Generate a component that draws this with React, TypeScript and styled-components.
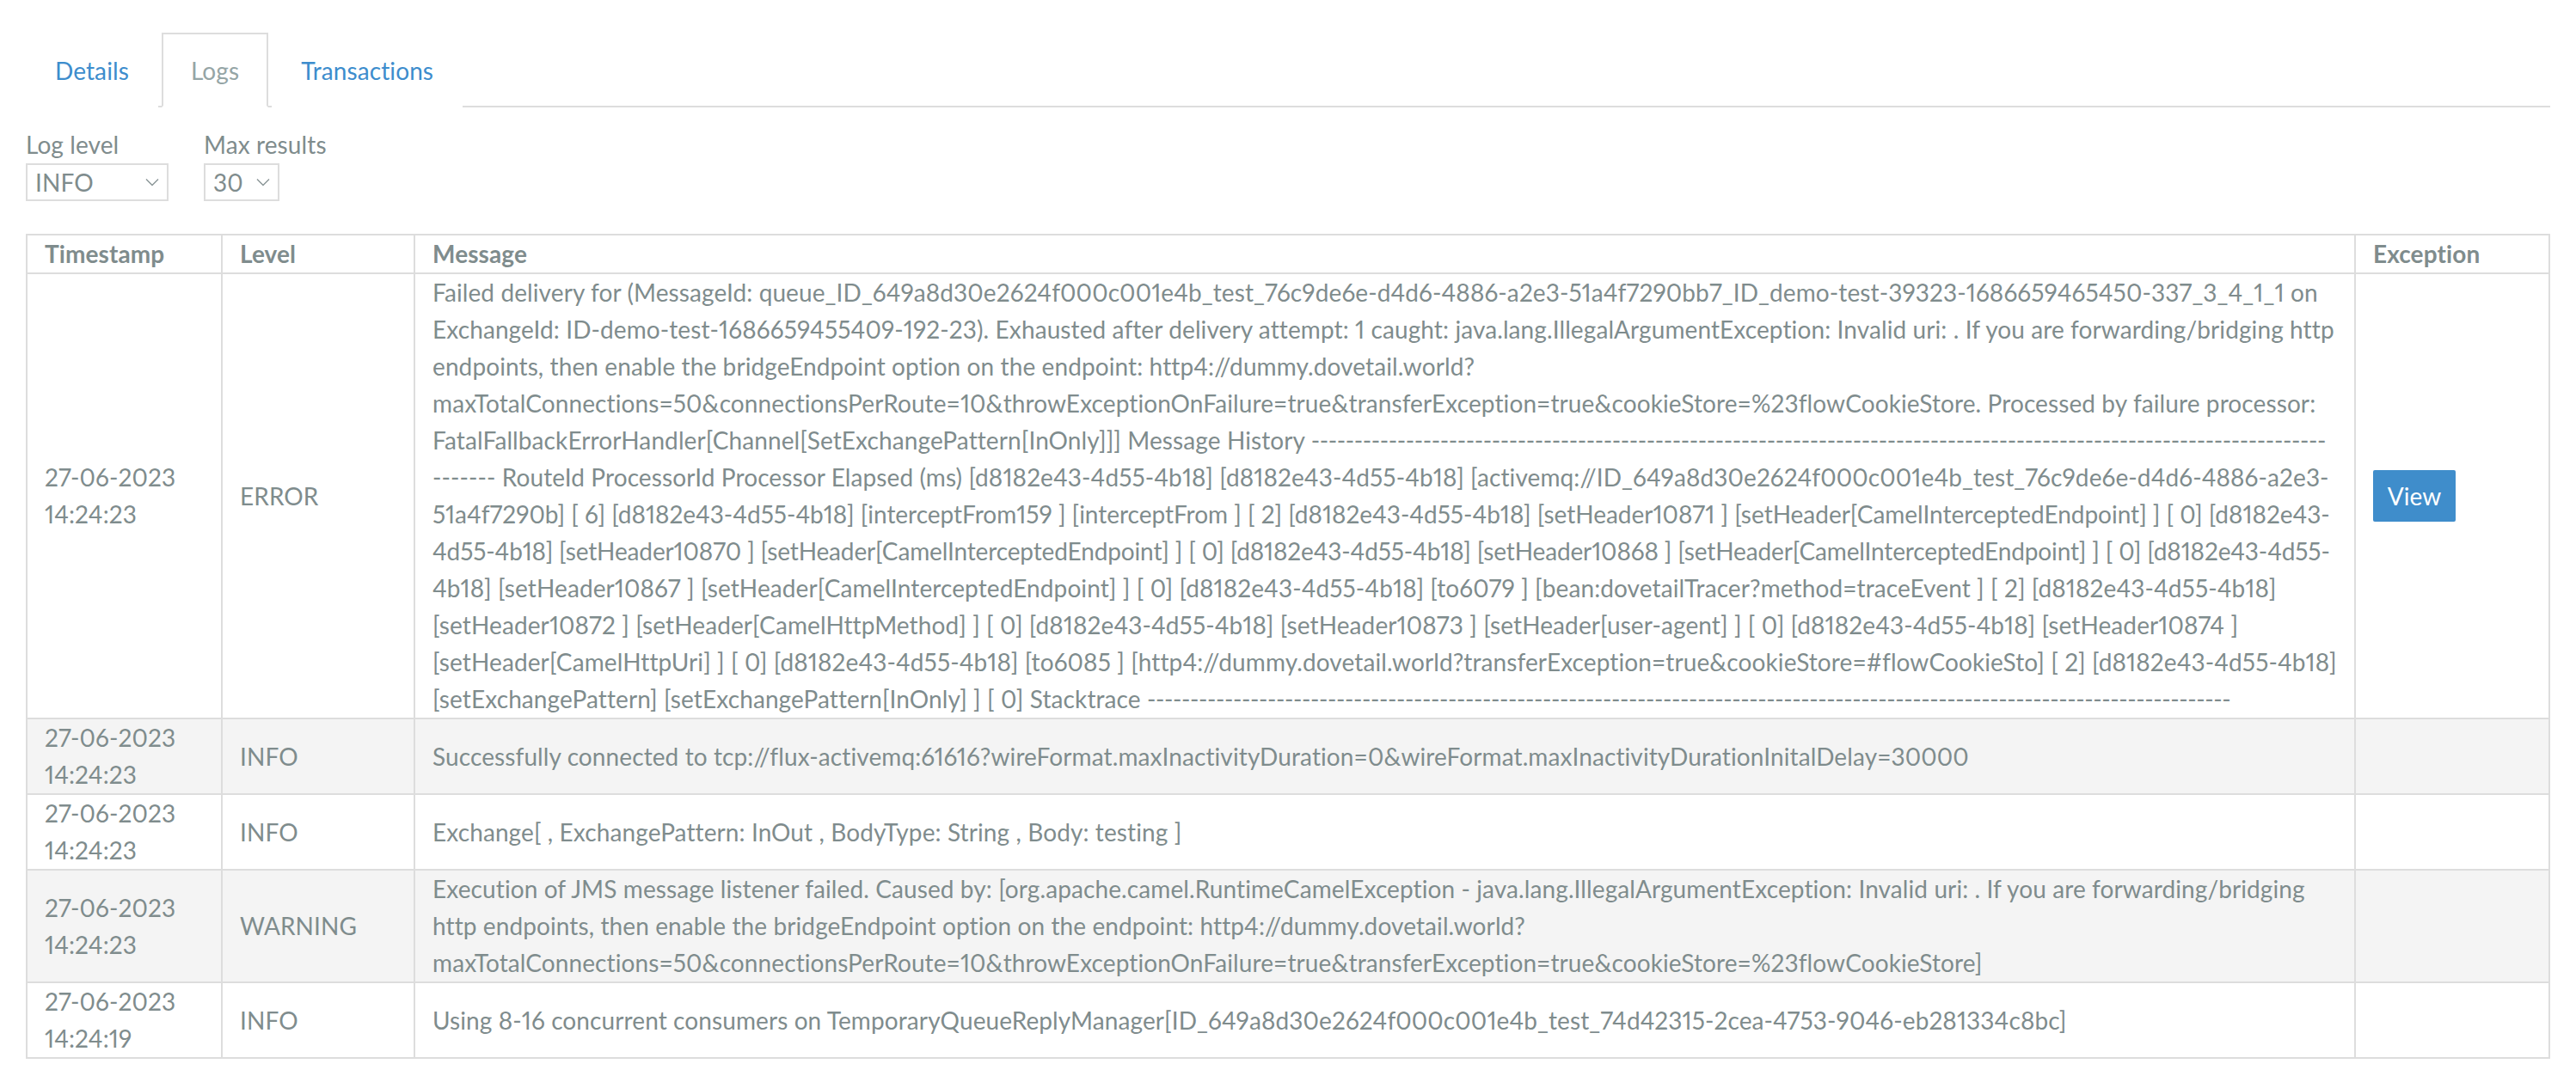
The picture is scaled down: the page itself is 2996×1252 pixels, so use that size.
import React, { useLayoutEffect, useRef, useState } from "react";
import styled, { createGlobalStyle } from "styled-components";

const GlobalStyle = createGlobalStyle`
  html, body {
    margin: 0;
    padding: 0;
    background: #ffffff;
  }
  body {
    font-family: "Lato", "Open Sans", sans-serif;
    font-size: 28px;
    letter-spacing: 0.1px;
    font-variant-numeric: proportional-nums;
    color: #7f8c8d;
  }
`;

type MsgLine = string | { text: string; dashes: number };

type LogRow = {
  date: string;
  time: string;
  level: string;
  lines: MsgLine[];
  exception?: boolean;
};

const rows: LogRow[] = [
  {
    date: "27-06-2023",
    time: "14:24:23",
    level: "ERROR",
    exception: true,
    lines: [
      "Failed delivery for (MessageId: queue_ID_649a8d30e2624f000c001e4b_test_76c9de6e-d4d6-4886-a2e3-51a4f7290bb7_ID_demo-test-39323-1686659465450-337_3_4_1_1 on",
      "ExchangeId: ID-demo-test-1686659455409-192-23). Exhausted after delivery attempt: 1 caught: java.lang.IllegalArgumentException: Invalid uri: . If you are forwarding/bridging http",
      "endpoints, then enable the bridgeEndpoint option on the endpoint: http4://dummy.dovetail.world?",
      "maxTotalConnections=50&connectionsPerRoute=10&throwExceptionOnFailure=true&transferException=true&cookieStore=%23flowCookieStore. Processed by failure processor:",
      { text: "FatalFallbackErrorHandler[Channel[SetExchangePattern[InOnly]]] Message History ", dashes: 118 },
      "------- RouteId ProcessorId Processor Elapsed (ms) [d8182e43-4d55-4b18] [d8182e43-4d55-4b18] [activemq://ID_649a8d30e2624f000c001e4b_test_76c9de6e-d4d6-4886-a2e3-",
      "51a4f7290b] [ 6] [d8182e43-4d55-4b18] [interceptFrom159 ] [interceptFrom ] [ 2] [d8182e43-4d55-4b18] [setHeader10871 ] [setHeader[CamelInterceptedEndpoint] ] [ 0] [d8182e43-",
      "4d55-4b18] [setHeader10870 ] [setHeader[CamelInterceptedEndpoint] ] [ 0] [d8182e43-4d55-4b18] [setHeader10868 ] [setHeader[CamelInterceptedEndpoint] ] [ 0] [d8182e43-4d55-",
      "4b18] [setHeader10867 ] [setHeader[CamelInterceptedEndpoint] ] [ 0] [d8182e43-4d55-4b18] [to6079 ] [bean:dovetailTracer?method=traceEvent ] [ 2] [d8182e43-4d55-4b18]",
      "[setHeader10872 ] [setHeader[CamelHttpMethod] ] [ 0] [d8182e43-4d55-4b18] [setHeader10873 ] [setHeader[user-agent] ] [ 0] [d8182e43-4d55-4b18] [setHeader10874 ]",
      "[setHeader[CamelHttpUri] ] [ 0] [d8182e43-4d55-4b18] [to6085 ] [http4://dummy.dovetail.world?transferException=true&cookieStore=#flowCookieSto] [ 2] [d8182e43-4d55-4b18]",
      { text: "[setExchangePattern] [setExchangePattern[InOnly] ] [ 0] Stacktrace ", dashes: 126 },
    ],
  },
  {
    date: "27-06-2023",
    time: "14:24:23",
    level: "INFO",
    lines: [
      "Successfully connected to tcp://flux-activemq:61616?wireFormat.maxInactivityDuration=0&wireFormat.maxInactivityDurationInitalDelay=30000",
    ],
  },
  {
    date: "27-06-2023",
    time: "14:24:23",
    level: "INFO",
    lines: ["Exchange[ , ExchangePattern: InOut , BodyType: String , Body: testing ]"],
  },
  {
    date: "27-06-2023",
    time: "14:24:23",
    level: "WARNING",
    lines: [
      "Execution of JMS message listener failed. Caused by: [org.apache.camel.RuntimeCamelException - java.lang.IllegalArgumentException: Invalid uri: . If you are forwarding/bridging",
      "http endpoints, then enable the bridgeEndpoint option on the endpoint: http4://dummy.dovetail.world?",
      "maxTotalConnections=50&connectionsPerRoute=10&throwExceptionOnFailure=true&transferException=true&cookieStore=%23flowCookieStore]",
    ],
  },
  {
    date: "27-06-2023",
    time: "14:24:19",
    level: "INFO",
    lines: [
      "Using 8-16 concurrent consumers on TemporaryQueueReplyManager[ID_649a8d30e2624f000c001e4b_test_74d42315-2cea-4753-9046-eb281334c8bc]",
    ],
  },
];

const BASE_SPACING = 0.1;

// keeps a log line on one row: squeezes the letter spacing when it would overflow
const MessageLine = ({ line }: { line: MsgLine }) => {
  const ref = useRef<HTMLDivElement>(null);
  const [spacing, setSpacing] = useState<number | null>(null);
  const text = typeof line === "string" ? line : line.text;

  useLayoutEffect(() => {
    const el = ref.current;
    if (!el) return;
    const over = el.scrollWidth - el.clientWidth;
    if (over > 0) setSpacing(BASE_SPACING - over / text.length - 0.05);
  }, [text]);

  return (
    <Line
      ref={ref}
      style={spacing !== null ? { letterSpacing: `${spacing}px` } : undefined}
    >
      {text}
      {typeof line !== "string" && <Dashes>{"-".repeat(line.dashes)}</Dashes>}
    </Line>
  );
};

const Chevron = () => (
  <svg width="16" height="10" viewBox="0 0 16 10" fill="none">
    <path d="M1 1.5 L8 8.5 L15 1.5" stroke="#8a9697" strokeWidth="1.4" />
  </svg>
);

const App = () => {
  return (
    <Page>
      <GlobalStyle />
      <Tabs>
        <Tab>Details</Tab>
        <Tab $active>Logs</Tab>
        <Tab>Transactions</Tab>
      </Tabs>

      <Filters>
        <Field>
          <Label>Log level</Label>
          <Select $width={166}>
            <span>INFO</span>
            <Chevron />
          </Select>
        </Field>
        <Field>
          <Label>Max results</Label>
          <Select $width={88}>
            <span>30</span>
            <Chevron />
          </Select>
        </Field>
      </Filters>

      <Table>
        <colgroup>
          <col style={{ width: 227 }} />
          <col style={{ width: 224 }} />
          <col />
          <col style={{ width: 226 }} />
        </colgroup>
        <thead>
          <tr>
            <Th>Timestamp</Th>
            <Th>Level</Th>
            <Th>Message</Th>
            <Th>Exception</Th>
          </tr>
        </thead>
        <tbody>
          {rows.map((row, i) => (
            <Tr key={i} $striped={i % 2 === 1}>
              <Td>
                {row.date}
                <br />
                {row.time}
              </Td>
              <Td>{row.level}</Td>
              <MessageCell>
                {row.lines.map((line, j) => (
                  <MessageLine key={j} line={line} />
                ))}
              </MessageCell>
              <Td>{row.exception && <ViewButton>View</ViewButton>}</Td>
            </Tr>
          ))}
        </tbody>
      </Table>
    </Page>
  );
};

export default App;

const Page = styled.div`
  padding: 0 30px;
  width: 2996px;
  box-sizing: border-box;
`;

const Tabs = styled.div`
  display: flex;
  padding-top: 38px;
  border-bottom: 2px solid #dddddd;
`;

const Tab = styled.div<{ $active?: boolean }>`
  height: 83px;
  display: flex;
  align-items: center;
  padding: 0 32px;
  margin-right: 4px;
  margin-bottom: -2px;
  border: 2px solid ${(p) => (p.$active ? "#dddddd" : "transparent")};
  border-bottom-color: ${(p) => (p.$active ? "#ffffff" : "transparent")};
  background: #ffffff;
  color: ${(p) => (p.$active ? "#95a5a6" : "#3d8dcd")};
  font-size: 28px;
`;

const Filters = styled.div`
  display: flex;
  gap: 41px;
  margin-top: 22px;
`;

const Field = styled.div`
  display: flex;
  flex-direction: column;
`;

const Label = styled.div`
  font-size: 28px;
  line-height: 43px;
  color: #7f8c8d;
`;

const Select = styled.div<{ $width: number }>`
  width: ${(p) => p.$width}px;
  height: 44px;
  box-sizing: border-box;
  border: 2px solid #dddddd;
  display: flex;
  align-items: center;
  justify-content: space-between;
  padding: 0 9px 0 9px;
  font-size: 28px;
  color: #7f8c8d;
`;

const Table = styled.table`
  margin-top: 38px;
  width: 100%;
  border-collapse: collapse;
  table-layout: fixed;
  border: 2px solid #dddddd;
`;

const Th = styled.th`
  text-align: left;
  font-weight: 700;
  font-size: 28px;
  line-height: 43px;
  padding: 0 20px;
  border: 2px solid #dddddd;
  color: #7f8c8d;
`;

const Tr = styled.tr<{ $striped: boolean }>`
  background: ${(p) => (p.$striped ? "#f4f4f4" : "#ffffff")};
`;

const Td = styled.td`
  vertical-align: middle;
  font-size: 28px;
  line-height: 43px;
  padding: 0 20px;
  border: 2px solid #dddddd;
  color: #7f8c8d;
`;

const MessageCell = styled(Td)`
  overflow: hidden;
`;

const Line = styled.div`
  white-space: nowrap;
  overflow: hidden;
`;

const Dashes = styled.span`
  letter-spacing: -0.4px;
`;

const ViewButton = styled.button`
  width: 96px;
  height: 60px;
  border: none;
  border-radius: 2px;
  background: #3f8dcb;
  color: #ffffff;
  font-family: inherit;
  font-size: 28px;
  letter-spacing: 0.1px;
  padding: 0;
`;
